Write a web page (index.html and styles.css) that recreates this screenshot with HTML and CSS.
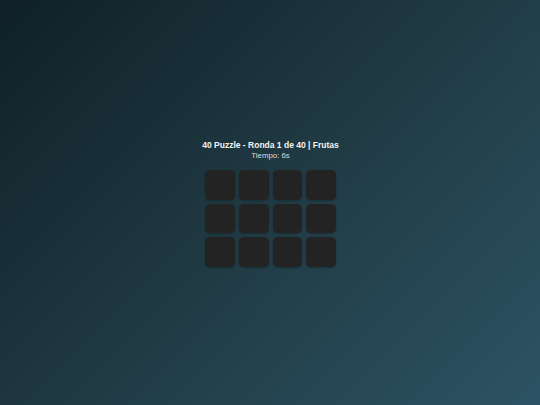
FILE: index.html
```html
<!DOCTYPE html>
<html lang="es">
<head>
<meta charset="utf-8">
<title>40 Puzzle</title>
<link rel="stylesheet" href="styles.css">
</head>
<body>
<main class="game">
  <div class="title">40 Puzzle - Ronda 1 de 40 | Frutas</div>
  <div class="timer">Tiempo: 6s</div>
  <div class="board">
    <div class="tile"></div><div class="tile"></div><div class="tile"></div><div class="tile"></div>
    <div class="tile"></div><div class="tile"></div><div class="tile"></div><div class="tile"></div>
    <div class="tile"></div><div class="tile"></div><div class="tile"></div><div class="tile"></div>
  </div>
</main>
</body>
</html>
```
FILE: styles.css
```css
html, body {
  margin: 0;
  height: 100%;
}
body {
  background: linear-gradient(135deg, #0f2027 0%, #203a43 50%, #2c5364 100%);
  font-family: "Liberation Sans", Arial, sans-serif;
  color: #fff;
  display: flex;
  align-items: center;
  justify-content: center;
}
.game {
  display: flex;
  flex-direction: column;
  align-items: center;
  margin-left: 1px;
  padding-top: 2px;
}
.title {
  font-size: 8.5px;
  font-weight: bold;
  line-height: 10px;
  color: #f4f4f4;
}
.timer {
  font-size: 7.8px;
  line-height: 10px;
  color: #dcdcdc;
  margin-top: 1px;
}
.board {
  margin-top: 9px;
  display: grid;
  grid-template-columns: repeat(4, 29.7px);
  grid-auto-rows: 29.7px;
  gap: 4px;
}
.tile {
  background: #232323;
  border-radius: 5px;
  box-shadow: 0 1px 2px rgba(0, 0, 0, 0.25);
}
```
